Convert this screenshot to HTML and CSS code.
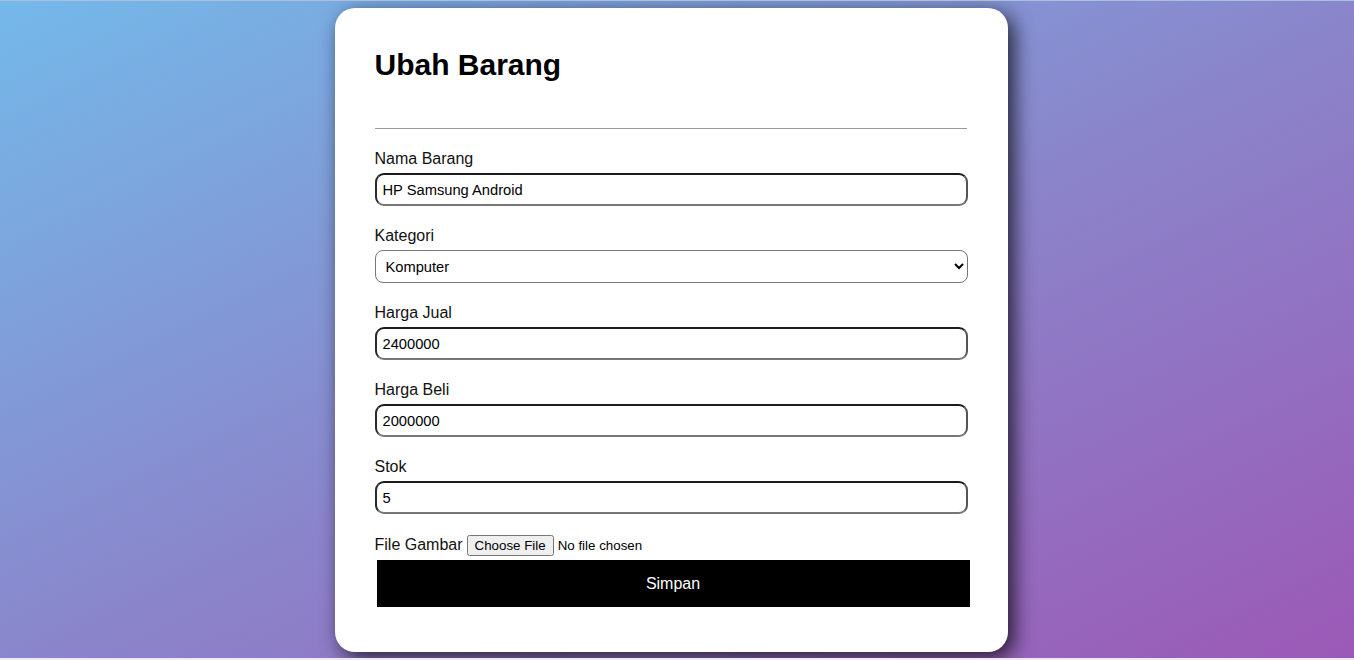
FILE: index.html
```html
<!DOCTYPE html>
<html lang="id">
<head>
    <meta charset="UTF-8">
    <meta name="viewport" content="width=device-width, initial-scale=1.0">
    <title>Ubah Barang</title>
    <link rel="stylesheet" href="styles.css">
</head>
<body>
    <div class="page">
        <div class="card">
            <h2>Ubah Barang</h2>
            <hr>
            <form class="form-barang">
                <div class="field">
                    <label for="nama">Nama Barang</label>
                    <input type="text" id="nama" value="HP Samsung Android">
                </div>
                <div class="field">
                    <label for="kategori">Kategori</label>
                    <select id="kategori">
                        <option>Komputer</option>
                        <option>Handphone</option>
                        <option>Aksesoris</option>
                    </select>
                </div>
                <div class="field">
                    <label for="harga-jual">Harga Jual</label>
                    <input type="text" id="harga-jual" value="2400000">
                </div>
                <div class="field">
                    <label for="harga-beli">Harga Beli</label>
                    <input type="text" id="harga-beli" value="2000000">
                </div>
                <div class="field">
                    <label for="stok">Stok</label>
                    <input type="text" id="stok" value="5">
                </div>
                <div class="file-row">
                    <span class="file-label">File Gambar</span>
                    <input type="file" id="gambar">
                </div>
                <button type="button" class="btn-simpan">Simpan</button>
            </form>
        </div>
    </div>
</body>
</html>
```

FILE: styles.css
```css
html {
    background-color: #efe8f5;
}
body {
    margin: 0;
    font-family: "Liberation Sans", Arial, sans-serif;
}
.page {
    height: 658px;
    box-sizing: border-box;
    padding: 8px 12px 0 0;
    background: linear-gradient(to bottom right, #74b9e9, #8a86cc 50%, #9b59b6);
    border-top: 1px solid #a9bfdc;
    display: flex;
    justify-content: center;
    align-items: flex-start;
    overflow: hidden;
}
.card {
    width: 593px;
    height: 564px;
    margin-top: -1px;
    padding: 40px;
    background-color: #fff;
    border-radius: 20px;
    box-shadow: 6px 6px 20px rgba(0, 0, 0, 0.75);
}
h2 {
    margin: 0;
    font-size: 30px;
    line-height: 34px;
    font-weight: bold;
    color: #000;
}
hr {
    margin: 46px 0 21px 0;
    border: none;
    border-top: 1px solid #999;
    width: 592px;
}
.field {
    margin-bottom: 21px;
}
.field label {
    display: block;
    font-size: 16px;
    line-height: 17px;
    margin-bottom: 6px;
    color: #111;
}
.field input {
    display: block;
    box-sizing: border-box;
    width: 593px;
    height: 33px;
    padding: 0 6px;
    font-family: "Liberation Sans", Arial, sans-serif;
    font-size: 14.7px;
    color: #000;
    border: 2px solid;
    border-color: #1c1c1c #555 #777 #2a2a2a;
    border-radius: 9px;
    outline: none;
}
.field select {
    display: block;
    box-sizing: border-box;
    width: 593px;
    height: 33px;
    padding: 0 6px;
    font-family: "Liberation Sans", Arial, sans-serif;
    font-size: 14.7px;
    color: #000;
    background-color: #fff;
    border: 1px solid #767676;
    border-radius: 8px;
}
.file-row {
    display: flex;
    align-items: center;
    gap: 4px;
    height: 22px;
    margin-top: -1px;
}
.file-label {
    font-size: 16px;
    color: #111;
}
.file-row input {
    font-family: "Liberation Sans", Arial, sans-serif;
    font-size: 13.33px;
}
.btn-simpan {
    display: block;
    width: 593px;
    height: 47px;
    margin: 4px 0 0 2px;
    background-color: #000;
    color: #fff;
    border: none;
    font-family: "Liberation Sans", Arial, sans-serif;
    font-size: 16px;
    cursor: pointer;
}
```
